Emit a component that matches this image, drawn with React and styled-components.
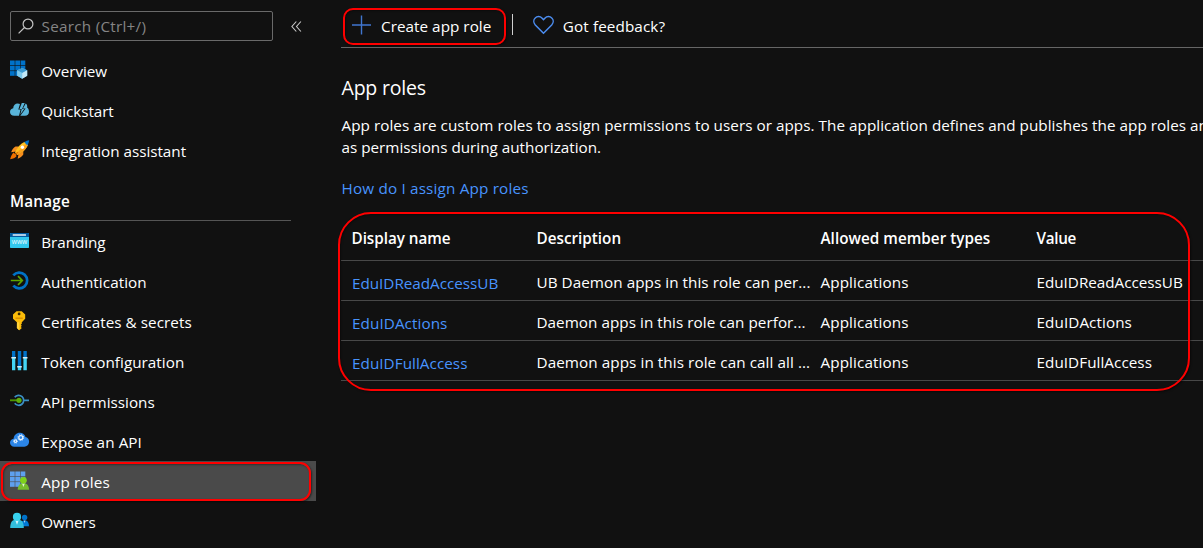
import React from "react";
import styled, { createGlobalStyle } from "styled-components";

const GlobalStyle = createGlobalStyle`
  * { box-sizing: border-box; }
  body {
    margin: 0;
    background: #111111;
    color: #ffffff;
    font: 15.25px/22px "Open Sans", "Noto Sans", sans-serif;
    overflow: hidden;
  }
`;

const Page = styled.div`
  display: flex;
  width: 100vw;
  height: 548px;
  overflow: hidden;
  background: #111111;
`;

/* Sidebar */
const Sidebar = styled.nav`
  flex: 0 0 316px;
  padding-top: 11px;
`;

const SearchRow = styled.div`
  display: flex;
  align-items: center;
  height: 30px;
  margin: 0 0 9px 10px;
`;

const SearchBox = styled.div`
  display: flex;
  align-items: center;
  width: 263px;
  height: 30px;
  padding: 0 0 0 7px;
  border: 1px solid #6a6a6a;
  border-radius: 2px;
  color: #858585;
  letter-spacing: 0.27px;

  svg { margin-right: 6.5px; }
  span { padding-bottom: 1px; }
`;

const Collapse = styled.svg`
  margin-left: 18px;
`;

const NavItem = styled.div`
  position: relative;
  display: flex;
  align-items: center;
  height: 40px;
  padding-left: 10px;
  background: ${(p) => (p.$selected ? "#4a4a4a" : "transparent")};
`;

const NavLabel = styled.span`
  margin-left: 11.3px;
  padding-top: 2px;
  letter-spacing: ${(p) => p.$track || 0}px;
  white-space: nowrap;
`;

const Section = styled.div`
  width: 281px;
  height: 51px;
  margin-left: 10px;
  padding-top: 20px;
`;

const SectionTitle = styled.div`
  height: 31px;
  border-bottom: 1px solid #555555;
  font-weight: 600;
  letter-spacing: 0.2px;
`;

const Icon = styled.svg`
  flex: none;
  display: block;
`;

/* Main pane */
const Main = styled.main`
  flex: 1;
  min-width: 0;
  padding-left: 25px;
`;

const Toolbar = styled.div`
  display: flex;
  align-items: center;
  height: 48px;
  border-bottom: 1px solid #666666;
`;

const Command = styled.div`
  position: relative;
  display: flex;
  align-items: center;
  height: 100%;
  padding: 2px 0 0 ${(p) => p.$inset}px;
  letter-spacing: ${(p) => p.$track}px;
  white-space: nowrap;

  span { padding-top: 2px; margin-left: ${(p) => p.$gap}px; }
`;

const Separator = styled.div`
  width: 1px;
  height: 21px;
  margin: 1px 0 0 20.5px;
  background: #d0d0d0;
`;

const Title = styled.h1`
  margin: 26px 0 0 0.5px;
  font-size: 19.5px;
  line-height: 28px;
  font-weight: 400;
  letter-spacing: -0.2px;
`;

const Intro = styled.p`
  margin: 12px 0 0 0.5px;
  white-space: nowrap;
`;

const IntroLine = styled.span`
  display: block;
  letter-spacing: ${(p) => p.$track}px;
`;

const HelpLink = styled.a`
  display: block;
  margin: 19px 0 0 0.5px;
  color: #4894fe;
  letter-spacing: 0.18px;
`;

const Table = styled.div`
  position: relative;
  margin-top: 12px;
`;

const Row = styled.div`
  display: grid;
  grid-template-columns: 185px 284px 216px 1fr;
  align-items: center;
  height: ${(p) => (p.$head ? 50 : 40)}px;
  padding: ${(p) => (p.$head ? "5px 0 0 10.5px" : "3px 0 0 10.5px")};
  border-bottom: 1px solid #484848;
  font-weight: ${(p) => (p.$head ? 600 : 400)};
  white-space: nowrap;
`;

const Cell = styled.span`
  letter-spacing: ${(p) => p.$track || 0}px;
`;

const NameLink = styled.a`
  padding: 1px 0 0 0.5px;
  margin-bottom: -1px;
  color: #4894fe;
  letter-spacing: ${(p) => p.$track || 0}px;
`;

/* Red call-out outline drawn over the content it surrounds */
const Callout = styled.div`
  position: absolute;
  z-index: 2;
  top: ${(p) => p.$top}px;
  left: ${(p) => p.$left}px;
  width: ${(p) => p.$width}px;
  height: ${(p) => p.$height}px;
  border: 2px solid #ff0000;
  border-radius: ${(p) => p.$radius}px;
  box-shadow: 1px 1px 2px rgba(0, 0, 0, 0.5), inset 1px 1px 2px rgba(0, 0, 0, 0.35);
  pointer-events: none;
`;

function Glyph({ children }) {
  return (
    <Icon width="20" height="20" viewBox="0 0 20 20" fill="none">
      {children}
    </Icon>
  );
}

const Tiles = ({ color }) => (
  <g fill={color}>
    {[0, 5.3, 10.6].map((y) =>
      [0, 5.3, 10.6].map((x) => (
        <rect key={`${x}-${y}`} x={x} y={y + 0.5} width="4.7" height="4.7" />
      ))
    )}
  </g>
);

const icons = {
  overview: (
    <Glyph>
      <Tiles color="#0072c9" />
      <path d="M12.2 7.9 17.2 10.3v5.5l-5 2.9-5-2.9v-5.5z" fill="#5cb6e4" />
      <path d="M12.2 7.9 17.2 10.3l-5 2.6-5-2.6z" fill="#3d9bd3" />
      <path d="M12.2 12.9v5.8l-5-2.9v-5.5z" fill="#7cc8ec" />
      <path d="M12.2 12.9v5.8l5-2.9v-5.5z" fill="#c3e8f8" />
    </Glyph>
  ),
  quickstart: (
    <Glyph>
      <path
        d="M4.2 15.8C1.7 15.8 0 14.200 0 12c0-2 1.300-3.400 3.200-3.700C3.300 5.300 5.300 3.400 7.700 3.400c.9 0 1.700.2 2.300.7L8.300 9.500h2.300L9 15.800z"
        fill="#59b4d9"
      />
      <path
        d="M10.300 15.800 15.600 8.500h-2.700l2.800-5.100c1.400.9 1.800 2.500 1.400 4.100C18.400 8.500 19 10 19 11.700c0 2.600-1.700 4.100-4 4.100z"
        fill="#59b4d9"
      />
      <path d="M11.800 2.900h2.900l-2.600 6.200h2.100l-3.900 5.400 1.400-5.600H9.500z" fill="#59b4d9" />
    </Glyph>
  ),
  rocket: (
    <Glyph>
      <path d="M8.500 6.500H5.500C3.500 7.500 2.200 9.500 1.200 12.200l4.800-.7zM13.300 11.500V14.500c-1 1.800-3.300 3.200-5.600 4.300l.8-4.600z" fill="#f78d1e" />
      <path d="M3.700 12.500C1.800 14 .8 16.500.2 19.300c2.800-.5 5.100-1.300 6.500-3.300z" fill="#ef7100" />
      <path d="M5 12.400C6.700 7.900 10.500 3.500 15 1.800l3 3C16.400 9 12.300 13 7.500 14.900z" fill="#ffc020" />
      <path d="M7.500 14.900C12.300 13 16.400 9 18 4.800l-1.500-1.500L6.200 13.600z" fill="#f9a11b" />
      <path d="M14.300 2.200C16 1 17.500.5 19.200.3c-.2 1.700-.8 3.500-1.800 5.100z" fill="#0072c6" />
      <circle cx="12.400" cy="7.300" r="1.700" fill="#fff" />
      <path d="m5.200 14.700 2.600-2.600" stroke="#e57200" strokeWidth="1.300" />
    </Glyph>
  ),
  branding: (
    <Glyph>
      <rect x="0" y="2" width="19" height="15" rx="0.700" fill="#32c8ee" />
      <path d="M0 6V2.700Q0 2 .7 2h17.600q.7 0 .7.700V6z" fill="#005ba1" />
      <rect x="2.700" y="3.200" width="13.300" height="1.600" rx="0.300" fill="#e6f2fb" />
      <text
        x="9.500"
        y="12.900"
        textAnchor="middle"
        fontFamily="Open Sans, sans-serif"
        fontSize="6.600"
        fill="#e8fbff"
      >
        www
      </text>
    </Glyph>
  ),
  auth: (
    <Glyph>
      <path d="M3.300 4.300A7.900 7.900 0 1 1 3.300 14.700" stroke="#0072c6" strokeWidth="2.700" />
      <path d="M.8 9.500h11M8 5.200l4.300 4.300L8 13.800" stroke="#5fa800" strokeWidth="1.700" />
    </Glyph>
  ),
  key: (
    <Glyph>
      <path
        d="M6.500.2h5.200l3.500 3.300v4.200l-3.400 3.600v1.500l-1 1 1 1-1 1.100 1 1.100-1 1.100L9.200 19.200l-2.300-2.100v-5.800L3 7.700V3.500z"
        fill="#fbbc09"
      />
      <path d="M7 11.300h2.200v7.900l-2.300-2.100z" fill="#ffd23c" />
      <circle cx="9.100" cy="2.900" r="1.400" fill="#3a2a00" />
      <path d="M5.500 7.200h7.200" stroke="#d68a00" strokeWidth="1.300" />
    </Glyph>
  ),
  token: (
    <Glyph>
      <path d="M2 0h3.300v6H2zM7.800 0h3.400v15H7.800zM13.400 0h3.400v6h-3.400z" fill="#0072c9" />
      <path d="M2 7h3.300v12.300H2zM7.800 15h3.400v4.300H7.800zM13.400 7h3.400v12.300h-3.400z" fill="#43d5f5" />
      <path d="M1.300 6h4.700v1.600H1.300zM7.200 15h4.600v1.500H7.200zM12.800 6h4.700v1.600h-4.700z" fill="#d2ecf8" />
    </Glyph>
  ),
  apiPermissions: (
    <Glyph>
      <path d="M4.700 6.300a5 5 0 1 1 0 6M14 9.300h5" stroke="#3a8fc4" strokeWidth="1.700" />
      <path d="M0 9.300h8" stroke="#4c9400" strokeWidth="1.900" />
      <circle cx="9" cy="9.300" r="2.600" fill="#5fae0a" />
    </Glyph>
  ),
  exposeApi: (
    <Glyph>
      <path
        d="M4.300 15.700C1.800 15.700 0 14 0 11.700c0-2.100 1.500-3.700 3.600-4C3.900 4.200 6.500 1.700 9.800 1.700c2.900 0 5 1.700 5.700 4.400 2.100.3 3.600 2.100 3.600 4.500 0 2.900-2.100 5.100-4.800 5.100z"
        fill="#2b85e7"
      />
      <circle cx="10.800" cy="6.600" r="2" stroke="#e8f3fd" strokeWidth="1.200" />
      <circle cx="10.800" cy="6.600" r="2.900" stroke="#e8f3fd" strokeWidth="1" strokeDasharray="1.140 1.140" />
      <circle cx="5.500" cy="10.200" r="1.200" stroke="#e8f3fd" strokeWidth="1.100" />
      <circle cx="5.500" cy="10.200" r="2" stroke="#e8f3fd" strokeWidth="0.900" strokeDasharray="0.785 0.785" />
    </Glyph>
  ),
  appRoles: (
    <Glyph>
      <Tiles color="#5ea0ef" />
      <path d="M7.600 18.700c.2-3.500 1.600-6 4-6.300h3.600c2.400.3 3.700 2.800 4 6.300z" fill="#76bc2d" />
      <path d="m12 12.500 1.400 3.500 1.400-3.500z" fill="#e4f4cc" />
      <circle cx="13.400" cy="9.300" r="3.400" fill="#7fd11b" />
    </Glyph>
  ),
  owners: (
    <Glyph>
      <path d="M10.800 15.200c0-3.300.9-5.400 2.700-5.700h2.300c2 .3 3.100 2.500 3.200 5.700z" fill="#0078d4" />
      <path d="m13.700 9.500.9 2.600.9-2.600z" fill="#b5dcf7" />
      <circle cx="14.600" cy="6.500" r="2.700" fill="#0072c9" />
      <path d="M.2 17c0-4.300 1.300-7.600 4-8h5.600c2.800.4 4 3.700 4 8z" fill="#32bedd" />
      <path d="m5.200 9 1.800 4.700L8.800 9z" fill="#d6f4fb" />
      <circle cx="7" cy="5.900" r="4.100" fill="#38d2ee" />
    </Glyph>
  ),
};

const topItems = [
  { label: "Overview", icon: "overview", track: -0.04 },
  { label: "Quickstart", icon: "quickstart", track: -0.08 },
  { label: "Integration assistant", icon: "rocket", track: -0.02 },
];

const manageItems = [
  { label: "Branding", icon: "branding", track: -0.07 },
  { label: "Authentication", icon: "auth", track: 0.06 },
  { label: "Certificates & secrets", icon: "key", track: 0.05 },
  { label: "Token configuration", icon: "token", track: 0.03 },
  { label: "API permissions", icon: "apiPermissions", track: 0.01 },
  { label: "Expose an API", icon: "exposeApi", track: 0.08 },
  { label: "App roles", icon: "appRoles", track: 0.14, selected: true },
  { label: "Owners", icon: "owners", track: -0.13 },
];

const roles = [
  {
    name: "EduIDReadAccessUB",
    track: -0.02,
    description: "UB Daemon apps in this role can per...",
    descriptionTrack: 0.05,
  },
  {
    name: "EduIDActions",
    track: 0.08,
    description: "Daemon apps in this role can perfor...",
    descriptionTrack: 0.035,
  },
  {
    name: "EduIDFullAccess",
    track: 0.05,
    description: "Daemon apps in this role can call all ...",
    descriptionTrack: 0.075,
  },
];

function Nav({ items }) {
  return items.map((item) => (
    <NavItem key={item.label} $selected={item.selected}>
      {icons[item.icon]}
      <NavLabel $track={item.track}>{item.label}</NavLabel>
      {item.selected && <Callout $top={1} $left={1} $width={310} $height={39} $radius={11} />}
    </NavItem>
  ));
}

export default function App() {
  return (
    <Page>
      <GlobalStyle />
      <Sidebar>
        <SearchRow>
          <SearchBox>
            <Icon width="17" height="17" viewBox="0 0 17 17" fill="none" stroke="#c4c4c4" strokeWidth="1.200">
              <circle cx="10" cy="6" r="4.900" />
              <path d="M6.500 9.500.6 15.400" />
            </Icon>
            <span>Search (Ctrl+/)</span>
          </SearchBox>
          <Collapse width="11" height="12" viewBox="0 0 11 12" fill="none" stroke="#c8c8c8" strokeWidth="1.100">
            <path d="M5.300 1.500.9 6.500l4.400 5M9.900 1.500 5.500 6.500l4.400 5" />
          </Collapse>
        </SearchRow>
        <Nav items={topItems} />
        <Section>
          <SectionTitle>Manage</SectionTitle>
        </Section>
        <Nav items={manageItems} />
      </Sidebar>
      <Main>
        <Toolbar>
          <Command $inset={11} $gap={10} $track={0.04}>
            <Icon width="19" height="20" viewBox="0 0 19 20" stroke="#4076cf" strokeWidth="1.400">
              <path d="M0 10h19M9.500.5v19" />
            </Icon>
            <span>Create app role</span>
            <Callout $top={8} $left={2} $width={163} $height={37} $radius={10} />
          </Command>
          <Separator />
          <Command $inset={20} $gap={9} $track={0.1}>
            <Icon width="21" height="20" viewBox="0 0 21 20" fill="none" stroke="#4c8df0" strokeWidth="1.500">
              <path d="M10.500 18.300 2.300 9.900C.3 7.700.4 4.700 2.200 3c1.900-1.900 4.900-1.800 6.700 0l1.600 1.700L12.100 3c1.800-1.800 4.800-1.900 6.700 0 1.800 1.700 1.900 4.700-.1 6.900z" />
            </Icon>
            <span>Got feedback?</span>
          </Command>
        </Toolbar>
        <Title>App roles</Title>
        <Intro>
          <IntroLine $track={0.04}>
            App roles are custom roles to assign permissions to users or apps. The application defines and publishes the
            app roles and
          </IntroLine>
          <IntroLine $track={0}>as permissions during authorization.</IntroLine>
        </Intro>
        <HelpLink>How do I assign App roles</HelpLink>
        <Table>
          <Row $head>
            <Cell $track={-0.04}>Display name</Cell>
            <Cell>Description</Cell>
            <Cell $track={0.03}>Allowed member types</Cell>
            <Cell $track={-0.3}>Value</Cell>
          </Row>
          {roles.map((role) => (
            <Row key={role.name}>
              <NameLink $track={role.track}>{role.name}</NameLink>
              <Cell $track={role.descriptionTrack}>{role.description}</Cell>
              <Cell $track={0.1}>Applications</Cell>
              <Cell $track={role.track}>{role.name}</Cell>
            </Row>
          ))}
          <Callout $top={1} $left={-3} $width={852} $height={179} $radius={33} />
        </Table>
      </Main>
    </Page>
  );
}
